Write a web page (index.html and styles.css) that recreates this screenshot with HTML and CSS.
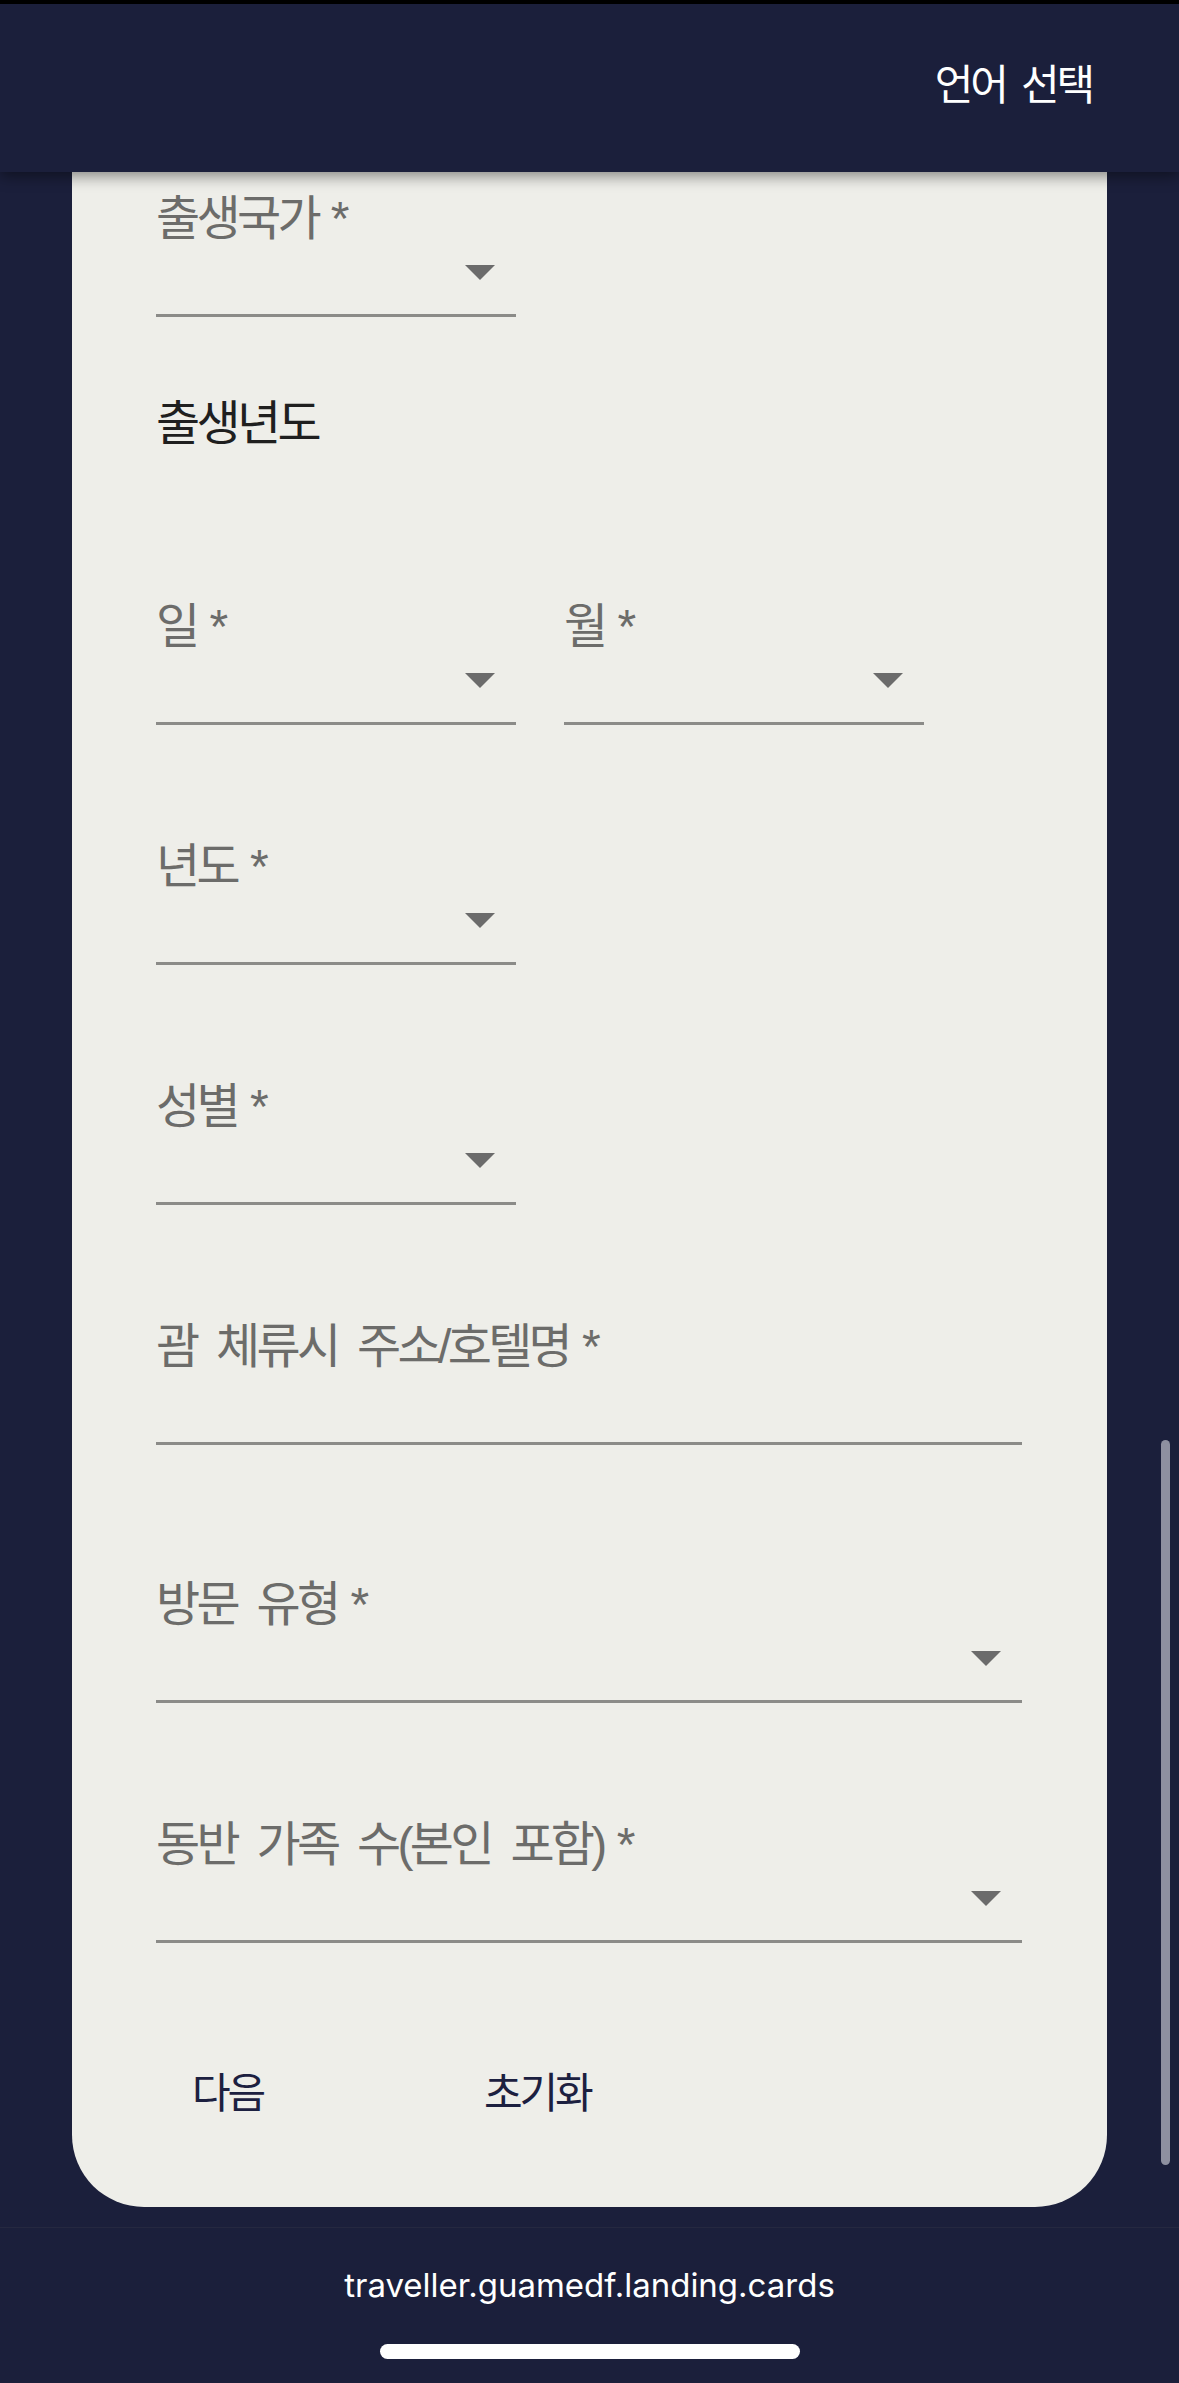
FILE: index.html
```html
<!DOCTYPE html>
<html lang="ko">
<head>
<meta charset="utf-8">
<title>언어 선택</title>
<link rel="stylesheet" href="styles.css">
</head>
<body>
<div class="status"></div>
<header class="appbar">
  <span class="lang">언어 선택</span>
</header>
<main class="page">
  <form class="card">
    <div class="field">
      <label class="label">출생국가<span class="req">*</span></label>
      <div class="control"><svg class="arrow" viewBox="7 10 10 5" width="30" height="15"><path d="M7 10l5 5 5-5z"/></svg></div>
    </div>

    <h2 class="heading">출생년도</h2>

    <div class="row">
      <div class="field">
        <label class="label">일<span class="req">*</span></label>
        <div class="control"><svg class="arrow" viewBox="7 10 10 5" width="30" height="15"><path d="M7 10l5 5 5-5z"/></svg></div>
      </div>
      <div class="field">
        <label class="label">월<span class="req">*</span></label>
        <div class="control"><svg class="arrow" viewBox="7 10 10 5" width="30" height="15"><path d="M7 10l5 5 5-5z"/></svg></div>
      </div>
    </div>

    <div class="field gap">
      <label class="label">년도<span class="req">*</span></label>
      <div class="control"><svg class="arrow" viewBox="7 10 10 5" width="30" height="15"><path d="M7 10l5 5 5-5z"/></svg></div>
    </div>

    <div class="field gap">
      <label class="label">성별<span class="req">*</span></label>
      <div class="control"><svg class="arrow" viewBox="7 10 10 5" width="30" height="15"><path d="M7 10l5 5 5-5z"/></svg></div>
    </div>

    <div class="field full gap">
      <label class="label">괌 체류시 주소/호텔명<span class="req">*</span></label>
      <div class="control"></div>
    </div>

    <div class="field full gap-lg">
      <label class="label">방문 유형<span class="req">*</span></label>
      <div class="control"><svg class="arrow" viewBox="7 10 10 5" width="30" height="15"><path d="M7 10l5 5 5-5z"/></svg></div>
    </div>

    <div class="field full gap">
      <label class="label">동반 가족 수(본인 포함)<span class="req">*</span></label>
      <div class="control"><svg class="arrow" viewBox="7 10 10 5" width="30" height="15"><path d="M7 10l5 5 5-5z"/></svg></div>
    </div>

    <div class="actions">
      <button type="button" class="btn first">다음</button>
      <button type="button" class="btn">초기화</button>
    </div>
  </form>
</main>
<footer class="bottombar">
  <div class="url">traveller.guamedf.landing.cards</div>
  <div class="home"></div>
</footer>
<div class="scrollbar"></div>
</body>
</html>
```

FILE: styles.css
```css
* { box-sizing: border-box; }

html, body {
  margin: 0;
  padding: 0;
}

body {
  width: 1179px;
  height: 2383px;
  overflow: hidden;
  background: #1b1f3b;
  font-family: "Liberation Sans", "Noto Sans CJK KR", sans-serif;
}

.status {
  height: 4px;
  background: #000;
}

.appbar {
  position: relative;
  z-index: 2;
  height: 168px;
  background: #1b1f3b;
  display: flex;
  justify-content: flex-end;
  align-items: center;
  padding: 0 87px 4px 0;
  box-shadow: 0 4px 14px rgba(0, 0, 0, 0.45);
}

.lang {
  color: #ffffff;
  font-size: 42px;
  line-height: 52px;
  letter-spacing: -3.2px;
  word-spacing: 7px;
}

.page {
  padding: 0 72px;
}

.card {
  background: #eeeee9;
  border-radius: 0 0 72px 72px;
  padding: 19px 85px 87px 84px;
  margin: 0 0 20px 0;
}

.field {
  display: flex;
  flex-direction: column;
  width: 360px;
}

.field.full {
  width: 866px;
}

.field.gap {
  margin-top: 114px;
}

.field.gap-lg {
  margin-top: 132px;
}

.label {
  font-size: 48px;
  line-height: 56px;
  color: #6c6c6a;
  letter-spacing: -3.7px;
  word-spacing: 10px;
  white-space: nowrap;
}

.req {
  margin-left: 13px;
}

.control {
  height: 70px;
  border-bottom: 3px solid #8b8b88;
  display: flex;
  justify-content: flex-end;
  align-items: flex-start;
  padding: 18px 21px 0 0;
}

.arrow {
  display: block;
  fill: #6b6b6b;
}

.heading {
  margin: 79px 0 0 0;
  font-size: 48px;
  line-height: 56px;
  font-weight: 400;
  color: #1f1f1f;
  letter-spacing: -3.7px;
}

.row {
  display: flex;
  gap: 48px;
  margin-top: 147px;
}

.actions {
  display: flex;
  margin-top: 125px;
  padding-left: 36px;
}

.btn {
  border: 0;
  background: none;
  padding: 0;
  margin: 0;
  font-family: "Liberation Sans", "Noto Sans CJK KR", sans-serif;
  font-size: 42px;
  line-height: 52px;
  font-weight: 400;
  color: #1c2040;
  letter-spacing: -3.2px;
  text-align: left;
}

.btn.first {
  width: 292px;
}

.bottombar {
  border-top: 1px solid #252840;
  padding-top: 37px;
  display: flex;
  flex-direction: column;
  align-items: center;
}

.url {
  font-family: "Inter", "Liberation Sans", sans-serif;
  font-size: 33px;
  line-height: 40px;
  color: #ffffff;
}

.home {
  margin-top: 39px;
  width: 420px;
  height: 15px;
  border-radius: 8px;
  background: #ffffff;
}

.scrollbar {
  position: absolute;
  left: 1161px;
  top: 1440px;
  width: 9px;
  height: 725px;
  border-radius: 5px;
  background: #8e90a0;
}
```
